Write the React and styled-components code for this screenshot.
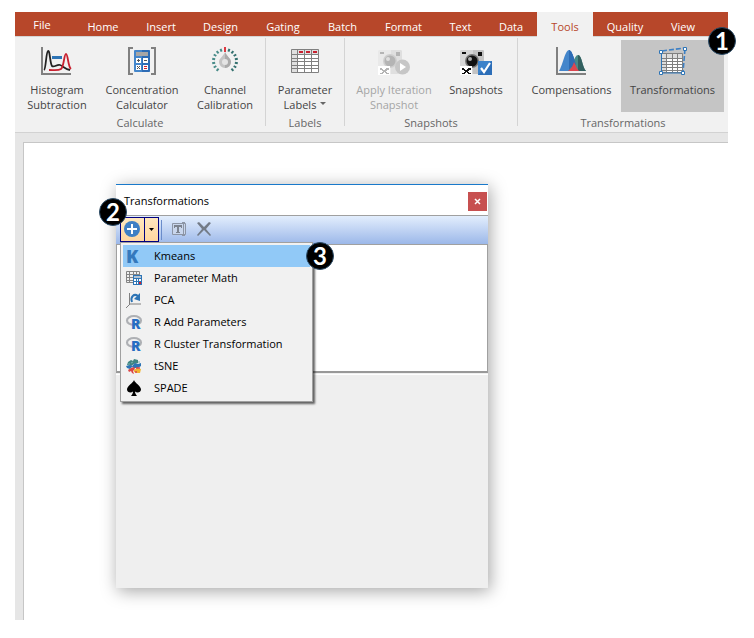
import React from "react";
import styled, { createGlobalStyle } from "styled-components";

const GlobalStyle = createGlobalStyle`
  * {
    box-sizing: border-box;
  }
  body {
    margin: 0;
    background: #fff;
    font-family: "Open Sans", "Noto Sans", sans-serif;
    font-size: 11px;
    line-height: 15px;
    color: #444;
  }
  button {
    margin: 0;
    padding: 0;
    border: 0;
    background: none;
    font: inherit;
    color: inherit;
  }
  svg {
    display: block;
    flex: none;
    overflow: visible;
  }
`;

// Elements
const Window = styled.div`
  display: flex;
  flex-direction: column;
  min-height: calc(100vh - 30px);
  margin: 12px 26px 18px 15px;
  background: #e6e6e6;
`;

const TabBar = styled.nav`
  display: flex;
  height: 24px;
  background: #b7472a;
`;

const Tab = styled.button`
  width: ${(p) => p.$width}px;
  height: ${(p) => (p.$active ? 25 : 24)}px;
  margin-right: ${(p) => (p.$file ? 4 : 0)}px;
  padding-top: ${(p) => (p.$file ? 0 : 4)}px;
  color: ${(p) => (p.$active ? "#b7472a" : "#fff")};
  background: ${(p) => (p.$active ? "#f1f1f1" : "transparent")};
  white-space: nowrap;
  z-index: 1;
`;

const Ribbon = styled.div`
  position: relative;
  display: flex;
  height: 97px;
  background: #f1f1f1;
  border-top: 1px solid #d4d4d4;
  border-bottom: 1px solid #d2d2d2;
`;

const Group = styled.section`
  display: flex;
  flex-direction: column;
  flex: ${(p) => (p.$grow ? "1 0 auto" : "none")};
  height: 88px;
  margin-top: 1px;
  padding: 2px 4px 0;
  border-right: ${(p) => (p.$grow ? "0" : "1px solid #d4d4d4")};
`;

const GroupTools = styled.div`
  display: flex;
  flex: none;
  justify-content: center;
  height: 72px;
`;

const GroupLabel = styled.div`
  padding-top: 3px;
  color: #666;
  text-align: center;
`;

const ToolButton = styled.button`
  display: flex;
  flex-direction: column;
  align-items: center;
  width: ${(p) => p.$width}px;
  padding-top: 5px;
  background: ${(p) => (p.$active ? "#c5c5c5" : "transparent")};
  color: ${(p) => (p.disabled ? "#a5a5a5" : "#444")};
`;

const ToolLabel = styled.span`
  padding-top: 5px;
  white-space: pre;
`;

const Caret = styled.span`
  display: inline-block;
  margin-left: 4px;
  vertical-align: 4px;
  border: 3px solid transparent;
  border-top-color: #666;
  border-bottom: 0;
`;

const Canvas = styled.main`
  flex: 1;
  margin: 9px 0 0 8px;
  padding: 41px 0 32px 92px;
  background: #fff;
  border: 1px solid #c6c6c6;
  border-width: 1px 0 0 1px;
`;

const Dialog = styled.section`
  position: relative;
  width: 372px;
  background: #efefef;
  border-top: 1px solid #1979ca;
  box-shadow: 2px 3px 16px rgba(0, 0, 0, 0.36);
  color: #000;
`;

const TitleBar = styled.header`
  display: flex;
  align-items: center;
  justify-content: space-between;
  height: 31px;
  padding: 0 1px 0 8px;
  background: #fff;
  border-bottom: 1px solid #a0a0a0;
`;

const DialogTitle = styled.h2`
  margin: 0;
  font-size: 11px;
  font-weight: 400;
`;

const CloseButton = styled.button`
  display: grid;
  place-items: center;
  width: 19px;
  height: 19px;
  margin-top: 2px;
  background: #c75050;
`;

const Toolbar = styled.div`
  display: flex;
  align-items: center;
  height: 28px;
  padding-left: 4px;
  background: linear-gradient(#e3eefd, #9cb8e9);
`;

const SplitButton = styled.div`
  display: flex;
  width: 39px;
  height: 25px;
  margin-bottom: 1px;
  border: 1px solid #000080;
  background: linear-gradient(#ffe7be, #ffd6a0);
`;

const SplitPart = styled.button`
  display: grid;
  place-items: center;
  width: ${(p) => p.$width}px;
  padding: 0 1px 1px 0;
  & + & {
    border-left: 1px solid #000080;
  }
`;

const Divider = styled.span`
  width: 1px;
  height: 20px;
  margin: 0 9px 0 2px;
  background: #6a8ccb;
`;

const IconButton = styled.button`
  width: 16px;
  height: 16px;
  margin: 0 9px 2px 0;
`;

const List = styled.div`
  height: 129px;
  background: #fff;
  border: 1px solid #a0a0a0;
  border-bottom: 2px solid #999;
`;

const Details = styled.div`
  height: 214px;
  margin-top: 1px;
  border-top: 1px solid #fff;
`;

const Menu = styled.ul`
  position: absolute;
  top: 57px;
  left: 4px;
  width: 193px;
  margin: 0;
  padding: 2px;
  list-style: none;
  background: #f1f1f1;
  border: 1px solid #a0a0a0;
  box-shadow: 2px 2px 2px rgba(0, 0, 0, 0.6);
`;

const MenuItem = styled.button`
  display: flex;
  align-items: center;
  gap: 12px;
  width: 100%;
  height: 22px;
  padding: 0 0 1px 3px;
  background: ${(p) => (p.$active ? "#91c9f7" : "transparent")};
  white-space: nowrap;
`;

const Badge = styled.span`
  position: absolute;
  top: ${(p) => p.$top}px;
  left: ${(p) => p.$left};
  right: ${(p) => p.$right};
  display: grid;
  place-items: center;
  width: 28px;
  height: 28px;
  border: 1px solid #2b4c68;
  border-radius: 50%;
  background: #000;
  color: #fff;
  font: 700 24px/26px Lato, sans-serif;
  z-index: 2;
`;

// Icons
const Big = ({ children }) => (
  <svg width="32" height="32" viewBox="0 0 32 32" fill="none" aria-hidden="true">
    {children}
  </svg>
);

const Small = ({ children }) => (
  <svg width="16" height="16" viewBox="0 0 16 16" fill="none" aria-hidden="true">
    {children}
  </svg>
);

const HistogramIcon = () => (
  <Big>
    <path d="M1 2v27h29" stroke="#808080" strokeWidth="2" />
    <path d="M11 11h10v3h-10z" fill="#2e75b6" />
    <path d="M3 25c2-1 2-18 4-19s2 13 4 15 5-2 8-1 5 4 10 5" stroke="#222" strokeWidth="1.8" />
    <path d="M8 25c5 0 9 1 12-1s3-15 5-15 2 13 5 15" stroke="#c8202f" strokeWidth="1.8" />
  </Big>
);

const CalculatorIcon = () => (
  <Big>
    <path d="M7 3H3v26h4M25 3h4v26h-4" stroke="#808080" strokeWidth="2" />
    <rect x="8" y="5" width="16" height="22" rx="1" fill="#4486cb" />
    <path d="M16 5h7l1 1v20l-1 1h-7z" fill="#2d6cb5" />
    <path d="M10 7h12v4H10z" fill="#a6a6a6" />
    <path d="M10 13h5v5h-5zM17 13h5v5h-5zM10 20h5v5h-5zM17 20h5v5h-5z" fill="#fff" />
    <path d="M11 15.500h3M12.500 14v3M18 15.500h3M11 21l3 3M14 21l-3 3" stroke="#555" />
    <path d="M18 21.500h3M18 23.500h3" stroke="#d4202c" />
  </Big>
);

const DialIcon = () => (
  <Big>
    {[-7, -6, -5, -4, -3, -2, -1, 0, 1, 2, 3, 4, 5, 6, 7].map((n) => (
      <path
        key={n}
        d={n === 0 ? "M16 2v5" : "M16 3v3"}
        stroke={n === 0 ? "#dc3a42" : n < 0 ? "#478b88" : "#33706e"}
        strokeWidth="2"
        transform={`rotate(${n * 20} 16 16)`}
      />
    ))}
    <path d="M16 7c2 5 6 6 6 10a6 6 0 0 1-12 0c0-4 4-5 6-10z" fill="#c4c4c4" />
    <path d="M16 7c2 5 6 6 6 10a6 6 0 0 1-6 6z" fill="#aaa" />
    <circle cx="16" cy="17" r="3" fill="#e4e4e4" />
  </Big>
);

const TableIcon = () => (
  <Big>
    <path d="M2 4h28v24H2z" fill="#fff" />
    <path d="M2 4h28v5H2zM2 4h7v24H2z" fill="#e0e0e0" />
    <path
      d="M2.500 4.500h27v23h-27zM8.500 4v24M15.500 4v24M22.500 4v24M2 9.500h28M2 13.500h28M2 16.500h28M2 20.500h28M2 23.500h28"
      stroke="#808080"
    />
    <path d="M10 6h4v2h-4zM17 6h4v2h-4zM24 6h4v2h-4z" fill="#c8202f" />
  </Big>
);

const Camera = ({ dark, mid, light, shade }) => (
  <>
    <path d="M0 6l1-1h22l1 1v23H0z" fill={light} />
    <path d="M13 5h10l1 1v23H13z" fill={shade} />
    <path d="M2 7h4v2H2zM18 7h4v4h-4z" fill={dark} />
    <circle cx="12" cy="16" r="7" fill={mid} />
    <circle cx="12" cy="16" r="5.500" fill={dark} />
    <circle cx="10" cy="14" r="2" fill="#f1f1f1" opacity="0.7" />
    <path d="M0 21h12v9H0z" fill="#fff" />
    <path
      d="M2 23h2v1h1v1h2v-1h1v-1h3v2H9v1H8v1h1v1h2v1H8v-1H7v-1H6v1H5v1H2v-1h2v-1h1v-1H4v-1H2z"
      fill={dark}
    />
  </>
);

const IterationIcon = () => (
  <Big>
    <Camera dark="#b4b4b4" mid="#cfcfcf" light="#e9e9e9" shade="#dfdfdf" />
    <circle cx="24.500" cy="22" r="7.500" fill="#c6c6c6" />
    <path d="M22 18v8l6-4z" fill="#fff" />
  </Big>
);

const SnapshotIcon = () => (
  <Big>
    <Camera dark="#111" mid="#777" light="#d6d6d6" shade="#c3c3c3" />
    <path d="M18 16h14v14H18z" fill="#3c82ca" />
    <path d="M32 16v14H18z" fill="#2c6eb8" />
    <path d="M21 23l3 4 6-9" stroke="#fff" strokeWidth="2.200" />
  </Big>
);

const PeaksIcon = () => (
  <Big>
    <path d="M1 2v27h29" stroke="#808080" strokeWidth="2" />
    <path d="M3 26C7 20 9 5 13 5s6 15 10 21z" fill="#4486cb" />
    <path d="M13 5c4 0 6 15 10 21H13z" fill="#2d6cb5" />
    <path d="M12 26c5-4 6-16 10-16s4 12 8 16z" fill="#478b88" />
    <path d="M22 10c4 0 4 12 8 16h-8z" fill="#33605f" />
    <path d="M13 23c2-5 3-10 2-17l3 8 2 5-2 2z" fill="#2d6cb5" />
    <path d="M12 26c3-2 5-5 6-9 2 4 3 7 5 9z" fill="#dc4650" />
  </Big>
);

const TransformIcon = () => (
  <Big>
    <path d="M4 9h21v19H4z" fill="#fff" />
    <path d="M4 9h21v4H4zM4 9h6v19H4z" fill="#ddd" />
    <path
      d="M4.500 8.500h21v19h-21zM9.500 8v20M15.500 8v20M20.500 8v20M4 13.500h21M4 16.500h21M4 19.500h21M4 22.500h21M4 25.500h21"
      stroke="#808080"
    />
    <path d="M4.500 7v21H26" stroke="#2e75b6" />
    <path d="M5 6l22-3M28 4l-2 23" stroke="#3c7fc4" strokeWidth="1.600" strokeDasharray="5 2" />
    <path
      d="M2.500 5.500h3v3h-3zM26.500 2.500h3v3h-3zM2.500 26.500h3v3h-3zM24.500 26.500h3v3h-3z"
      fill="#fff"
      stroke="#2e75b6"
    />
  </Big>
);

const PlusIcon = () => (
  <Small>
    <circle cx="8" cy="8" r="8" fill="#3f7fc4" />
    <path d="M8 3v10M3 8h10" stroke="#fff" strokeWidth="2" />
  </Small>
);

const RenameIcon = () => (
  <Small>
    <path d="M1.500 2.500h13v11h-13z" fill="#c9d6ec" stroke="#8c95a5" />
    <path d="M3 4h8v3h-1V6H8v5h1v1H5v-1h1V6H4v1H3z" fill="#7c838f" />
    <path d="M11 1.500h3M12.500 2v12M11 14.500h3" stroke="#8c95a5" />
  </Small>
);

const DeleteIcon = () => (
  <Small>
    <path d="M1 2l2-1 5 5 5-5 2 1-5 6 5 6-1 1-6-6-6 6-1-1 5-6z" fill="#737b87" />
  </Small>
);

const KIcon = () => (
  <Small>
    <text x="0" y="15" fill="#3579bd" fontFamily="Open Sans" fontWeight="800" fontSize="18">
      K
    </text>
  </Small>
);

const MathIcon = () => (
  <Small>
    <path d="M.5 1.500h13v11H.5zM3.500 1v12M7.500 1v12M10.500 1v12M0 4.500h14M0 7.500h14M0 10.500h14" stroke="#858585" />
    <path d="M7 5h9v10H7z" fill="#2e75b6" />
    <path d="M8 6h7v2H8z" fill="#b4c4d4" />
    <path d="M8 9h2v2H8zM11 9h1v2h-1zM13 9h2v2h-2zM8 12h2v2H8zM11 12h1v2h-1z" fill="#fff" />
    <path d="M13 12h2v2h-2z" fill="#d4202c" />
  </Small>
);

const PcaIcon = () => (
  <Small>
    <path d="M3.500 1v11H15M4 12l-4 4" stroke="#808080" />
    <path d="M6 10C4 5 8 1 12 4" stroke="#2e75b6" strokeWidth="2" />
    <path d="M14 1v8l-6-2z" fill="#2e75b6" />
  </Small>
);

const RIcon = () => (
  <Small>
    <ellipse cx="8" cy="6.500" rx="7" ry="4.500" stroke="#aeb0b4" strokeWidth="2.200" />
    <text x="5" y="15" fill="#276dc3" fontFamily="Open Sans" fontWeight="800" fontSize="14">
      R
    </text>
  </Small>
);

const TsneIcon = () => (
  <Small>
    <path d="M2 4l3-2 2 1 1-2 4 1 0 3-4 1-3 2-4-1z" fill="#3f8583" />
    <path d="M0 8l4-1 3 1-3 3-3-1z" fill="#2e75b6" />
    <path d="M7 7l2-2 3 1 3-1v3l-3 2-4 0-2-1z" fill="#2e75b6" />
    <path d="M2 12l3-2 3-1 1 2-2 2 1 3-2-1-1-2-2 1z" fill="#dc4646" />
    <path d="M8 12l3-2 4 1-1 4-3 0-3-1z" fill="#f2b632" />
    <path d="M5 5l2-1M2 6l2 0M12 4l2 0" stroke="#78b0ae" />
    <path d="M10 10l4 0M9 14l2 0" stroke="#dc4646" strokeWidth="1.500" />
  </Small>
);

const SpadeIcon = () => (
  <Small>
    <path
      d="M8 0c1 3 7 6 7 9.500 0 3-4 4-6 2 0 2 1 3 2 4.500H5c1-1.500 2-2.500 2-4.500-2 2-6 1-6-2C1 6 7 3 8 0z"
      fill="#000"
    />
  </Small>
);

const tabs = [
  { name: "File", width: 54, file: true },
  { name: "Home", width: 60 },
  { name: "Insert", width: 56 },
  { name: "Design", width: 63 },
  { name: "Gating", width: 62 },
  { name: "Batch", width: 57 },
  { name: "Format", width: 65 },
  { name: "Text", width: 49 },
  { name: "Data", width: 52 },
  { name: "Tools", width: 56, active: true },
  { name: "Quality", width: 64 },
  { name: "View", width: 52 },
];

const groups = [
  {
    name: "Calculate",
    tools: [
      { label: "Histogram\nSubtraction", width: 76, icon: <HistogramIcon /> },
      { label: "Concentration\nCalculator", width: 94, icon: <CalculatorIcon /> },
      { label: "Channel\nCalibration", width: 72, icon: <DialIcon /> },
    ],
  },
  {
    name: "Labels",
    tools: [{ label: "Parameter\nLabels", width: 70, icon: <TableIcon />, caret: true }],
  },
  {
    name: "Snapshots",
    tools: [
      { label: "Apply Iteration\nSnapshot", width: 90, icon: <IterationIcon />, disabled: true },
      { label: "Snapshots", width: 74, icon: <SnapshotIcon /> },
    ],
  },
  {
    name: "Transformations",
    grow: true,
    tools: [
      { label: "Compensations", width: 99, icon: <PeaksIcon /> },
      { label: "Transformations", width: 103, icon: <TransformIcon />, active: true },
    ],
  },
];

const menuItems = [
  { name: "Kmeans", icon: <KIcon />, active: true },
  { name: "Parameter Math", icon: <MathIcon /> },
  { name: "PCA", icon: <PcaIcon /> },
  { name: "R Add Parameters", icon: <RIcon /> },
  { name: "R Cluster Transformation", icon: <RIcon /> },
  { name: "tSNE", icon: <TsneIcon /> },
  { name: "SPADE", icon: <SpadeIcon /> },
];

const App = () => (
  <>
    <GlobalStyle />
    <Window>
      <TabBar>
        {tabs.map((tab) => (
          <Tab key={tab.name} $width={tab.width} $file={tab.file} $active={tab.active}>
            {tab.name}
          </Tab>
        ))}
      </TabBar>
      <Ribbon>
        {groups.map((group) => (
          <Group key={group.name} $grow={group.grow}>
            <GroupTools>
              {group.tools.map((tool) => (
                <ToolButton
                  key={tool.label}
                  $width={tool.width}
                  $active={tool.active}
                  disabled={tool.disabled}
                >
                  {tool.icon}
                  <ToolLabel>
                    {tool.label}
                    {tool.caret && <Caret />}
                  </ToolLabel>
                </ToolButton>
              ))}
            </GroupTools>
            <GroupLabel>{group.name}</GroupLabel>
          </Group>
        ))}
        <Badge $top={-10} $right="-8px">
          1
        </Badge>
      </Ribbon>
      <Canvas>
        <Dialog>
          <TitleBar>
            <DialogTitle>Transformations</DialogTitle>
            <CloseButton aria-label="Close">
              <svg width="5" height="5" viewBox="0 0 5 5" aria-hidden="true">
                <path d="M0 0l5 5M5 0L0 5" stroke="#fff" strokeWidth="1.500" />
              </svg>
            </CloseButton>
          </TitleBar>
          <Toolbar>
            <SplitButton>
              <SplitPart $width={23} aria-label="Add">
                <PlusIcon />
              </SplitPart>
              <SplitPart $width={14} aria-label="Choose transformation">
                <svg width="5" height="3" viewBox="0 0 5 3" aria-hidden="true">
                  <path d="M0 0h5L2.500 3z" fill="#000" />
                </svg>
              </SplitPart>
            </SplitButton>
            <Divider />
            <IconButton aria-label="Rename">
              <RenameIcon />
            </IconButton>
            <IconButton aria-label="Delete">
              <DeleteIcon />
            </IconButton>
          </Toolbar>
          <List />
          <Details />
          <Menu>
            {menuItems.map((item) => (
              <li key={item.name}>
                <MenuItem $active={item.active}>
                  {item.icon}
                  {item.name}
                </MenuItem>
              </li>
            ))}
            <Badge $top={-1} $left="185px">
              3
            </Badge>
          </Menu>
          <Badge $top={13} $left="-17px">
            2
          </Badge>
        </Dialog>
      </Canvas>
    </Window>
  </>
);

export default App;
